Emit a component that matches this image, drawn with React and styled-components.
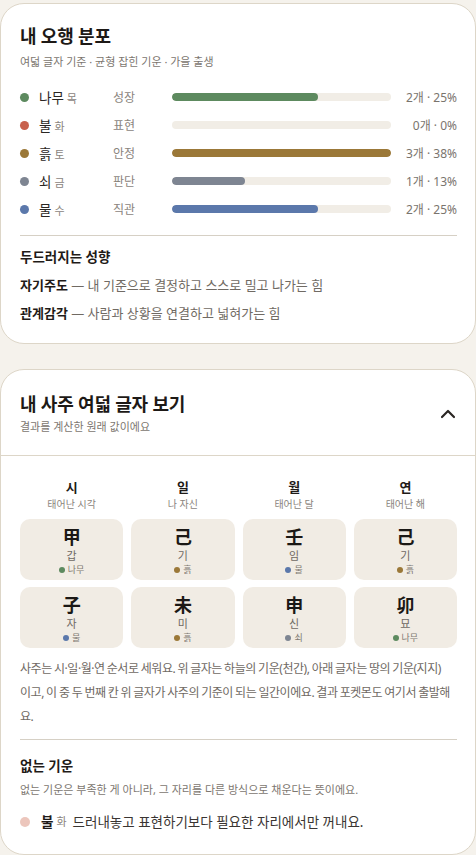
import React from 'react';
import styled, { createGlobalStyle } from 'styled-components';
import { ChevronUp } from 'lucide-react';

const GlobalStyle = createGlobalStyle`
  html, body {
    margin: 0;
    padding: 0;
    background: #f5f2ec;
  }
  body {
    font-family: 'Noto Sans', 'Noto Sans CJK KR', sans-serif;
    color: #1f1b18;
  }
`;

// element colours
const colors = {
  wood: '#5d8a5f',
  fire: '#c8614d',
  earth: '#9b7838',
  metal: '#7e8592',
  water: '#5b78ab',
};

const elements = [
  { key: 'wood', name: '나무', han: '목', word: '성장', count: 2, pct: 25 },
  { key: 'fire', name: '불', han: '화', word: '표현', count: 0, pct: 0 },
  { key: 'earth', name: '흙', han: '토', word: '안정', count: 3, pct: 38 },
  { key: 'metal', name: '쇠', han: '금', word: '판단', count: 1, pct: 13 },
  { key: 'water', name: '물', han: '수', word: '직관', count: 2, pct: 25 },
];

const pillars = [
  {
    label: '시', sub: '태어난 시각',
    top: { han: '甲', read: '갑', el: 'wood', elName: '나무' },
    bottom: { han: '子', read: '자', el: 'water', elName: '물' },
  },
  {
    label: '일', sub: '나 자신',
    top: { han: '己', read: '기', el: 'earth', elName: '흙' },
    bottom: { han: '未', read: '미', el: 'earth', elName: '흙' },
  },
  {
    label: '월', sub: '태어난 달',
    top: { han: '壬', read: '임', el: 'water', elName: '물' },
    bottom: { han: '申', read: '신', el: 'metal', elName: '쇠' },
  },
  {
    label: '연', sub: '태어난 해',
    top: { han: '己', read: '기', el: 'earth', elName: '흙' },
    bottom: { han: '卯', read: '묘', el: 'wood', elName: '나무' },
  },
];

const Page = styled.div`
  padding-top: 3px;
  display: flex;
  flex-direction: column;
  gap: 25px;
`;

const Card = styled.section`
  background: #fff;
  border: 1px solid #ddd6c8;
  border-radius: 24px;
  overflow: hidden;
`;

const CardBody = styled.div`
  padding: ${(p) => p.$pad || '20px 18px 20px 19px'};
`;

const Title = styled.h2`
  margin: 0;
  font-size: 18px;
  line-height: 24px;
  font-weight: 700;
  color: #1d1916;
  letter-spacing: -0.2px;
`;

const Sub = styled.p`
  margin: ${(p) => p.$m || '6px 0 0'};
  font-size: 11px;
  line-height: 16px;
  color: #7c766f;
`;

const Rows = styled.div`
  margin-top: 13px;
  display: flex;
  flex-direction: column;
`;

const Row = styled.div`
  display: grid;
  grid-template-columns: 19px 74px 59px 1fr 66px;
  align-items: center;
  height: 28px;
`;

const Dot = styled.span`
  display: inline-block;
  flex-shrink: 0;
  width: ${(p) => p.$size || 9}px;
  height: ${(p) => p.$size || 9}px;
  border-radius: 50%;
  background: ${(p) => p.$color};
`;

const Name = styled.span`
  font-size: 13.5px;
  color: #2a2623;
`;

const Han = styled.span`
  font-size: 11px;
  color: #8a847d;
  margin-left: 3px;
`;

const Word = styled.span`
  font-size: 12px;
  color: #8a847d;
`;

const Track = styled.div`
  height: 8px;
  border-radius: 4px;
  background: #f1ede6;
  overflow: hidden;
`;

const Fill = styled.div`
  height: 100%;
  border-radius: 4px;
  background: ${(p) => p.$color};
`;

const Value = styled.span`
  font-size: 12px;
  color: #7a746d;
  text-align: right;
`;

const Divider = styled.hr`
  margin: ${(p) => p.$m || '12px 0 0'};
  border: none;
  border-top: 1px solid #d6d0c5;
`;

const SectionTitle = styled.h3`
  margin: ${(p) => p.$m || '11px 0 0'};
  font-size: 13.5px;
  line-height: 20px;
  font-weight: 700;
  color: #1f1b18;
`;

const Trait = styled.p`
  margin: 8px 0 0;
  font-size: 13px;
  line-height: 20px;
  color: #706a63;
  b {
    color: #1f1b18;
    font-weight: 700;
  }
`;

const Header = styled.div`
  display: flex;
  align-items: center;
  justify-content: space-between;
  padding: 22px 15px 20px 19px;
  border-bottom: 1px solid #ddd6c8;
`;

const HeaderText = styled.div`
  display: flex;
  flex-direction: column;
`;

const Toggle = styled.button`
  border: none;
  background: none;
  padding: 0;
  color: #2a2623;
  display: flex;
  cursor: pointer;
`;

const PillarGrid = styled.div`
  display: grid;
  grid-template-columns: repeat(4, 1fr);
  gap: 8px;
`;

const Pillar = styled.div`
  display: flex;
  flex-direction: column;
  align-items: center;
`;

const PillarLabel = styled.span`
  font-size: 13px;
  line-height: 18px;
  font-weight: 700;
  color: #1f1b18;
`;

const PillarSub = styled.span`
  margin-top: 1px;
  font-size: 10px;
  line-height: 14px;
  color: #8a847d;
  margin-bottom: 8px;
`;

const Cell = styled.div`
  width: 100%;
  box-sizing: border-box;
  background: #f1ece4;
  border-radius: 10px;
  padding: 7px 0 4px;
  display: flex;
  flex-direction: column;
  align-items: center;
  & + & {
    margin-top: 7px;
  }
`;

const Glyph = styled.span`
  font-size: 18px;
  line-height: 22px;
  font-weight: 700;
  color: #1b1815;
`;

const Reading = styled.span`
  font-size: 11px;
  line-height: 15px;
  color: #6f6963;
`;

const ElTag = styled.span`
  display: flex;
  align-items: center;
  gap: 3px;
  font-size: 9px;
  line-height: 13px;
  color: #7f7972;
`;

const Note = styled.p`
  margin: 9px 0 0;
  font-size: 12px;
  line-height: 24px;
  letter-spacing: -0.45px;
  word-spacing: -0.5px;
  color: #6f6963;
`;

const Missing = styled.div`
  display: flex;
  align-items: center;
  margin-top: 14px;
  font-size: 13.5px;
  line-height: 20px;
  color: #3a3532;
`;

const MissingName = styled.b`
  margin-left: 11px;
  font-weight: 700;
  color: #1f1b18;
`;

const Desc = styled.span`
  margin-left: 6px;
`;

function CellBox({ data }) {
  return (
    <Cell>
      <Glyph>{data.han}</Glyph>
      <Reading>{data.read}</Reading>
      <ElTag>
        <Dot $size={6} $color={colors[data.el]} />
        {data.elName}
      </ElTag>
    </Cell>
  );
}

export default function App() {
  const max = Math.max(...elements.map((e) => e.count));
  return (
    <>
      <GlobalStyle />
      <Page>
        <Card>
          <CardBody>
            <Title>내 오행 분포</Title>
            <Sub>여덟 글자 기준 · 균형 잡힌 기운 · 가을 출생</Sub>
            <Rows>
              {elements.map((e) => (
                <Row key={e.key}>
                  <Dot $color={colors[e.key]} />
                  <Name>
                    {e.name}
                    <Han>{e.han}</Han>
                  </Name>
                  <Word>{e.word}</Word>
                  <Track>
                    <Fill
                      $color={colors[e.key]}
                      style={{ width: `${(e.count / max) * 100}%` }}
                    />
                  </Track>
                  <Value>
                    {e.count}개 · {e.pct}%
                  </Value>
                </Row>
              ))}
            </Rows>
            <Divider />
            <SectionTitle>두드러지는 성향</SectionTitle>
            <Trait>
              <b>자기주도</b> — 내 기준으로 결정하고 스스로 밀고 나가는 힘
            </Trait>
            <Trait>
              <b>관계감각</b> — 사람과 상황을 연결하고 넓혀가는 힘
            </Trait>
          </CardBody>
        </Card>

        <Card>
          <Header>
            <HeaderText>
              <Title>내 사주 여덟 글자 보기</Title>
              <Sub $m="3px 0 0">결과를 계산한 원래 값이에요</Sub>
            </HeaderText>
            <Toggle aria-label="접기">
              <ChevronUp size={24} strokeWidth={2.2} />
            </Toggle>
          </Header>
          <CardBody $pad="22px 18px 22px 19px">
            <PillarGrid>
              {pillars.map((p) => (
                <Pillar key={p.label}>
                  <PillarLabel>{p.label}</PillarLabel>
                  <PillarSub>{p.sub}</PillarSub>
                  <CellBox data={p.top} />
                  <CellBox data={p.bottom} />
                </Pillar>
              ))}
            </PillarGrid>
            <Note>
              사주는 시·일·월·연 순서로 세워요. 위 글자는 하늘의 기운(천간), 아래 글자는 땅의 기운(지지)
              <br />
              이고, 이 중 두 번째 칸 위 글자가 사주의 기준이 되는 일간이에요. 결과 포켓몬도 여기서 출발해
              <br />
              요.
            </Note>
            <Divider $m="10px 0 0" />
            <SectionTitle $m="16px 0 0">없는 기운</SectionTitle>
            <Sub $m="6px 0 0">없는 기운은 부족한 게 아니라, 그 자리를 다른 방식으로 채운다는 뜻이에요.</Sub>
            <Missing>
              <Dot $size={10} $color="#ecc6bc" />
              <MissingName>불</MissingName>
              <Han>화</Han>
              <Desc>드러내놓고 표현하기보다 필요한 자리에서만 꺼내요.</Desc>
            </Missing>
          </CardBody>
        </Card>
      </Page>
    </>
  );
}
